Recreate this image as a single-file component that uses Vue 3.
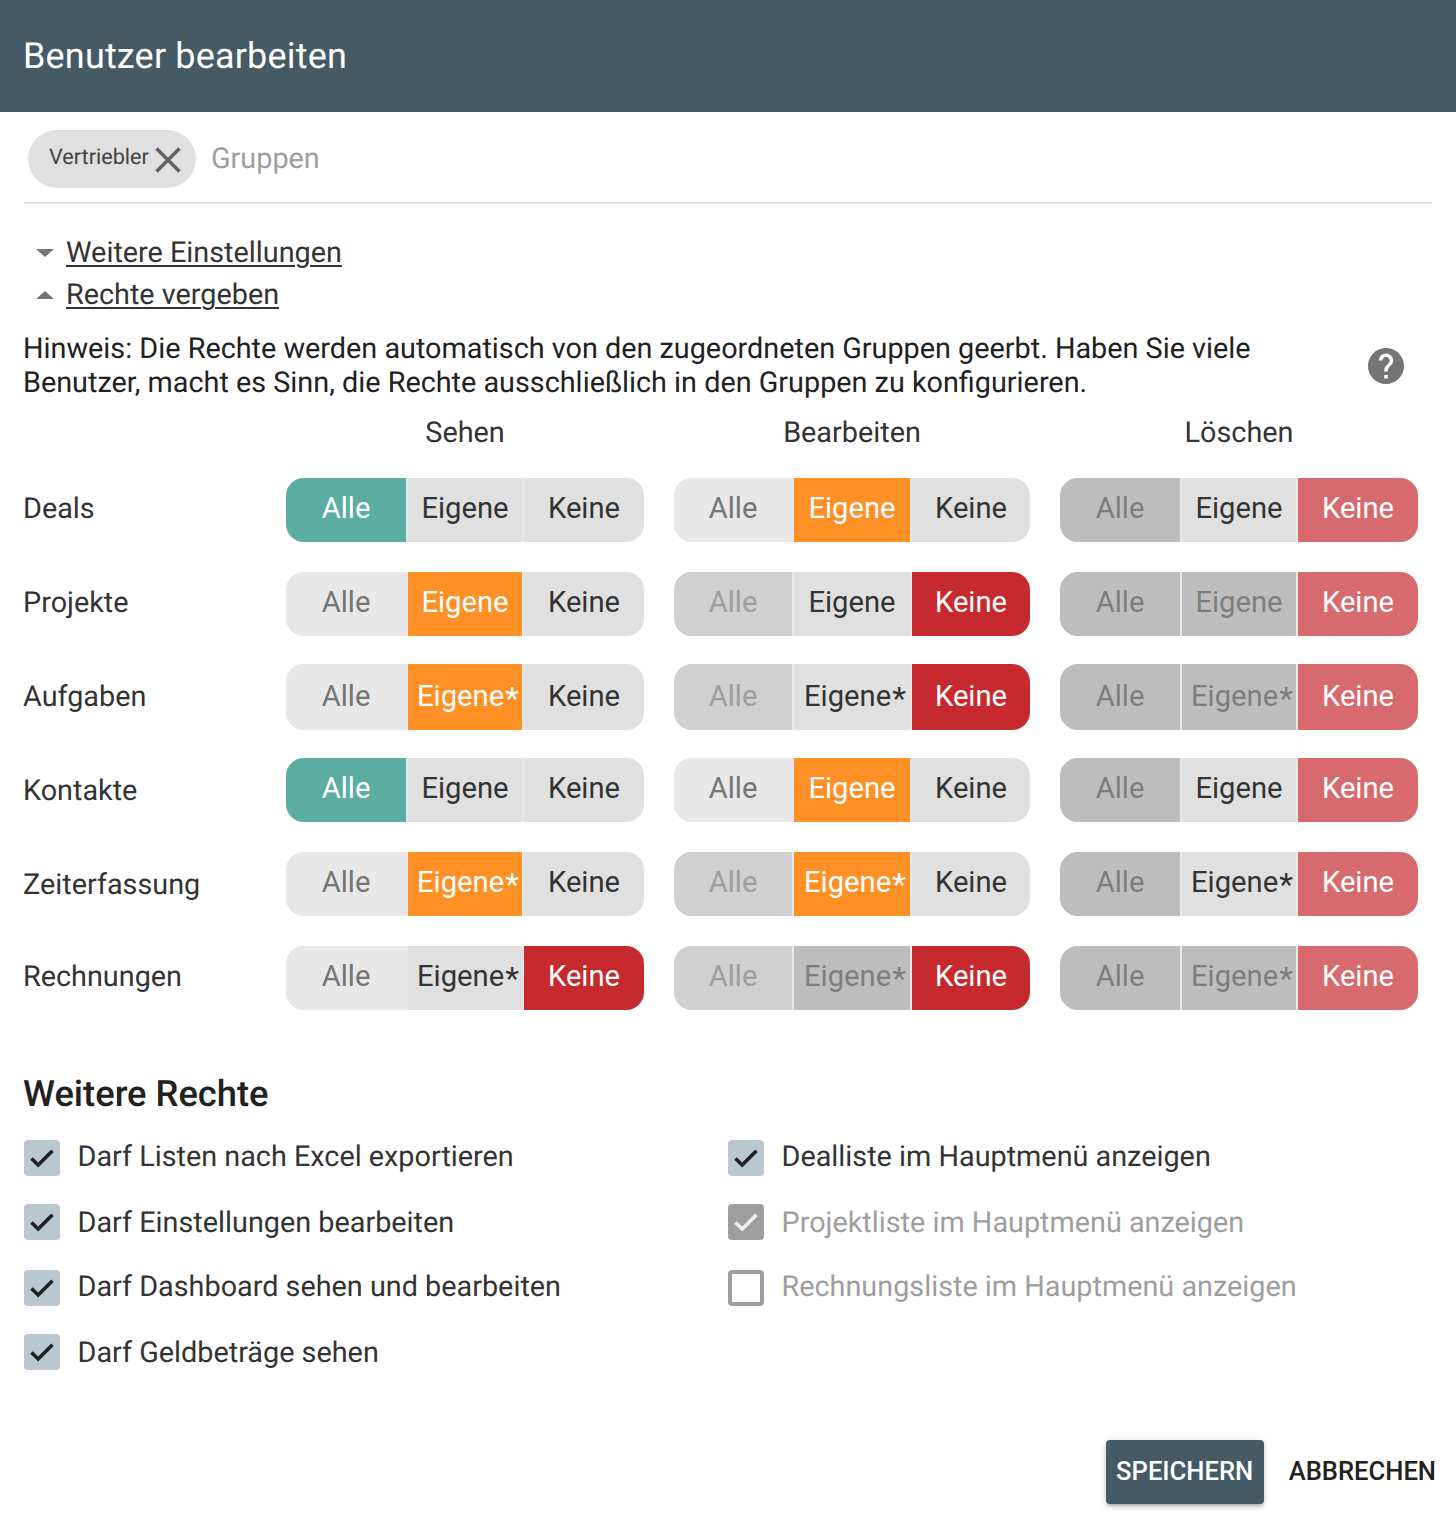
<template>
  <div class="dialog">
    <header class="dialog-head">Benutzer bearbeiten</header>

    <div class="group-field">
      <span class="chip">
        Vertriebler
        <svg class="chip-x" viewBox="0 0 26 26"><path d="M1.5 1.5L24.5 24.5M24.5 1.5L1.5 24.5" /></svg>
      </span>
      <span class="group-placeholder">Gruppen</span>
    </div>

    <div class="toggles">
      <div class="toggle"><i class="tri tri--down"></i><a>Weitere Einstellungen</a></div>
      <div class="toggle"><i class="tri tri--up"></i><a>Rechte vergeben</a></div>
    </div>

    <div class="hint">
      <p>Hinweis: Die Rechte werden automatisch von den zugeordneten Gruppen geerbt. Haben Sie viele Benutzer, macht es Sinn, die Rechte ausschließlich in den Gruppen zu konfigurieren.</p>
      <svg class="help" viewBox="2 2 20 20"><path d="M12 2C6.48 2 2 6.48 2 12s4.48 10 10 10 10-4.48 10-10S17.52 2 12 2zm1 17h-2v-2h2v2zm2.07-7.75l-.9.92C13.45 12.9 13 13.5 13 15h-2v-.5c0-1.1.45-2.1 1.17-2.83l1.24-1.26c.37-.36.59-.86.59-1.41 0-1.1-.9-2-2-2s-2 .9-2 2H8c0-2.21 1.79-4 4-4s4 1.79 4 4c0 .88-.36 1.68-.93 2.25z" /></svg>
    </div>

    <div class="perm-head">
      <span>Sehen</span>
      <span>Bearbeiten</span>
      <span>Löschen</span>
    </div>

    <div class="perm-table">
      <div v-for="row in rows" :key="row.name" class="perm-row" :class="{ 'perm-row--tight': row.name === 'Aufgaben' }">
        <div class="perm-name">{{ row.name }}</div>
        <div
          v-for="(states, i) in row.cols"
          :key="i"
          class="seg-group"
          :class="['seg-group--' + i, { 'seg-group--tall': row.name === 'Aufgaben' }]"
        >
          <button
            v-for="(st, j) in states"
            :key="j"
            class="seg"
            :class="['seg--' + st, { 'seg--star': j === 1 && row.star }]"
          >
            {{ labels[j] }}<span v-if="j === 1 && row.star" class="star">*</span>
          </button>
        </div>
      </div>
    </div>

    <h2 class="more-title">Weitere Rechte</h2>
    <div class="more-grid">
      <div class="more-col">
        <label v-for="c in leftChecks" :key="c" class="check">
          <span class="box box--on">
            <svg viewBox="0 0 36 36"><path d="M7.5 18.5L14.2 25L28.5 10.8" /></svg>
          </span>
          <span class="check-text">{{ c }}</span>
        </label>
      </div>
      <div class="more-col">
        <label class="check">
          <span class="box box--on">
            <svg viewBox="0 0 36 36"><path d="M7.5 18.5L14.2 25L28.5 10.8" /></svg>
          </span>
          <span class="check-text">Dealliste im Hauptmenü anzeigen</span>
        </label>
        <label class="check check--off">
          <span class="box box--dis">
            <svg viewBox="0 0 36 36"><path d="M7.5 18.5L14.2 25L28.5 10.8" /></svg>
          </span>
          <span class="check-text">Projektliste im Hauptmenü anzeigen</span>
        </label>
        <label class="check check--off">
          <span class="box box--empty"></span>
          <span class="check-text">Rechnungsliste im Hauptmenü anzeigen</span>
        </label>
      </div>
    </div>

    <footer class="actions">
      <button class="btn btn--save">SPEICHERN</button>
      <button class="btn btn--cancel">ABBRECHEN</button>
    </footer>
  </div>
</template>

<script setup>
const labels = ['Alle', 'Eigene', 'Keine']

const rows = [
  { name: 'Deals', cols: [['teal', 'norm', 'norm'], ['off', 'orange', 'norm'], ['dis2', 'norm', 'lred']] },
  { name: 'Projekte', cols: [['off', 'orange', 'norm'], ['dis1', 'norm', 'red'], ['dis2', 'dis2', 'lred']] },
  { name: 'Aufgaben', star: true, cols: [['off', 'orange', 'norm'], ['dis1', 'norm', 'red'], ['dis2', 'dis2', 'lred']] },
  { name: 'Kontakte', cols: [['teal', 'norm', 'norm'], ['off', 'orange', 'norm'], ['dis2', 'norm', 'lred']] },
  { name: 'Zeiterfassung', star: true, cols: [['off', 'orange', 'norm'], ['dis1', 'orange', 'norm'], ['dis2', 'norm', 'lred']] },
  { name: 'Rechnungen', star: true, cols: [['off', 'norm', 'red'], ['dis1', 'dis2', 'red'], ['dis2', 'dis2', 'lred']] }
]

const leftChecks = [
  'Darf Listen nach Excel exportieren',
  'Darf Einstellungen bearbeiten',
  'Darf Dashboard sehen und bearbeiten',
  'Darf Geldbeträge sehen'
]
</script>

<style>
html, body { background: #fff; }
</style>

<style scoped>
.dialog {
  width: 1456px; height: 1514px; overflow: hidden; background: #fff;
  font-family: Roboto, "Liberation Sans", sans-serif; color: #212121;
  text-rendering: geometricPrecision;
}
.dialog-head {
  height: 112px; background: #455a64; color: #fff;
  font-size: 36px; letter-spacing: .17px; line-height: 112px; padding-left: 23px;
}

.group-field {
  display: flex; align-items: center; height: 90px; margin: 0 24px; padding: 0 4px;
  border-bottom: 2px solid #e0e0e0;
}
.chip {
  display: flex; align-items: center; height: 58px; width: 168px; box-sizing: border-box;
  margin-top: 4px; padding: 0 0 4px 21px; background: #e0e0e0; border-radius: 29px;
  font-size: 21.6px; color: #424242; white-space: nowrap;
}
.chip-x { width: 26px; height: 26px; margin: 5px 0 0 6px; flex: none; }
.chip-x path { stroke: #616161; stroke-width: 3.4; fill: none; }
.group-placeholder { margin: 4px 0 0 15px; font-size: 28.8px; color: #9e9e9e; }

.toggles { padding: 28px 0 0 36px; }
.toggle { display: flex; align-items: center; height: 42px; font-size: 28.8px; color: #333; }
.toggle a { margin-left: 12px; text-decoration: underline; text-underline-offset: 3px; text-decoration-thickness: 2px; }
.tri { width: 0; height: 0; border-left: 9px solid transparent; border-right: 9px solid transparent; }
.tri--down { border-top: 8px solid #757575; }
.tri--up { border-bottom: 8px solid #757575; }

.hint { display: flex; align-items: center; margin: 16px 52px 0 23px; }
.hint p { flex: 1; margin: 0; font-size: 28.8px; line-height: 34px; color: #212121; padding-right: 101px; }
.help { width: 36px; height: 36px; flex: none; }
.help path { fill: #757575; }

.perm-head {
  display: grid; grid-template-columns: 358px 356px 358px; column-gap: 30px;
  margin-left: 286px; margin-top: 16px; height: 34px; line-height: 34px;
  font-size: 28.8px; text-align: center; color: #333;
}

.perm-table { margin-top: 13px; }
.perm-row {
  display: grid; grid-template-columns: 262px 358px 386px 388px;
  align-items: center; height: 94px; padding-left: 24px;
}
.perm-row--tight { height: 92px; }
.perm-name { font-size: 28.8px; color: #333; margin: -2px 0 0 -1px; }
.perm-row:nth-child(3) .perm-name { margin-top: 0; }
.perm-row:nth-child(4) .perm-name, .perm-row:nth-child(5) .perm-name { margin-top: 2px; }

.seg-group {
  display: grid; grid-template-columns: 120px 1fr 120px; column-gap: 2px;
  width: 358px; height: 64px; border-radius: 18px; overflow: hidden; background: #e8e8e8;
}
.seg-group--1 { width: 356px; grid-template-columns: 118px 1fr 118px; margin-left: 30px; }
.seg-group--2 { margin-left: 30px; }
.seg-group--tall { height: 66px; }
.seg-group--tall .seg { padding-bottom: 2px; }

.seg {
  border: none; padding: 0 0 4px; margin: 0; font-family: inherit; font-size: 29.2px; white-space: nowrap; overflow: hidden;
}
.seg-group .seg--star { padding-left: 6px; }
.star { font-size: 32px; line-height: 0; margin-left: 1px; vertical-align: -3px; }
.seg--norm { background: #e0e0e0; color: #333; }
.seg--off { background: #e8e8e8; color: #757575; }
.seg--dis1 { background: #d0d0d0; color: #9e9e9e; }
.seg--dis2 { background: #bdbdbd; color: #7d7d7d; }
.seg--teal { background: #5bada2; color: #fff; }
.seg--orange { background: #ff9026; color: #fff; }
.seg--red { background: #c62a2f; color: #fff; }
.seg--lred { background: #d76a6c; color: #fff; }

.more-title { margin: 47px 0 0 23px; font-size: 36.3px; font-weight: 500; line-height: 44px; color: #212121; }

.more-grid { display: flex; margin: 24px 0 0 24px; }
.more-col { width: 704px; }
.check { display: flex; align-items: center; height: 36px; font-size: 28.8px; color: #333; margin-bottom: 28px; white-space: nowrap; }
.check:nth-child(3) { margin-top: 30px; }
.check-text { margin-top: 2px; }
.check:nth-child(odd) .check-text { margin-top: -2px; }
.check--off { color: #9e9e9e; }
.box {
  display: flex; flex: none; width: 36px; height: 36px; margin-right: 17.5px;
  border-radius: 4px; box-sizing: border-box;
}
.box svg { width: 36px; height: 36px; }
.box path { fill: none; stroke-width: 3.6; }
.box--on { background: #b9c7ce; }
.box--on path { stroke: #212121; }
.box--dis { background: #9e9e9e; }
.box--dis path { stroke: #eee; }
.box--empty { border: 4px solid #9e9e9e; background: #fff; }

.actions { display: flex; align-items: center; justify-content: flex-end; margin-top: 42px; padding-right: 20px; }
.btn { border: none; font-family: inherit; font-size: 25.6px; font-weight: 500; }
.btn--save {
  width: 158px; height: 64px; padding: 0 0 2px; background: #455a64; color: #fff; border-radius: 4px;
  box-shadow: 0 3px 3px -2px rgba(0,0,0,.2), 0 3px 4px rgba(0,0,0,.14), 0 1px 8px rgba(0,0,0,.12);
}
.btn--cancel { margin: 0 0 2px 25px; padding: 0; background: none; color: #212121; }
</style>
